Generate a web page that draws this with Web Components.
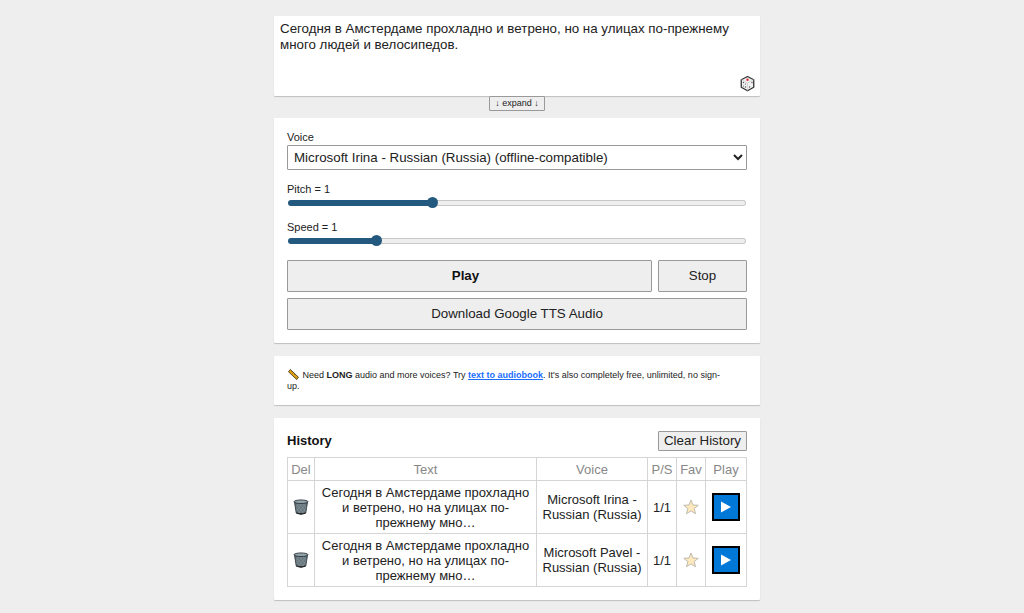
<!DOCTYPE html>
<html lang="ru">
<head>
<meta charset="utf-8">
<meta name="viewport" content="width=device-width, initial-scale=1">
<title>Text to Speech</title>
<style>
  body { margin: 0; background: #eee; color: #222; font-family: "Liberation Sans", Arial, sans-serif; font-size: 13px; }
</style>
</head>
<body>
<tts-app></tts-app>

<template id="t-app">
  <style>
    :host { display: block; padding: 16px 12px 12px 22px; }
    main { max-width: 486px; margin: 0 auto; display: flex; flex-direction: column; }
    .gap { margin-bottom: 13px; }
    .long { font-size: 9px; line-height: 11px; margin: 0; padding-right: 16px; }
    a { color: #1a6dff; font-weight: bold; }
    svg { width: 13px; height: 11px; vertical-align: -2px; }
  </style>
  <main>
    <text-editor></text-editor>
    <ui-card class="gap"><voice-controls></voice-controls></ui-card>
    <ui-card class="gap">
      <p class="long"><svg viewBox="0 0 24 24" aria-hidden="true"><path d="M1 6 5 1 23 18 19 23Z" fill="#e5a50f" stroke="#3d3220" stroke-width="1.800" stroke-linejoin="round"/><path d="m9 5-2 2m5 1-2 2m5 1-2 2m5 1-2 2m5 1-2 2" stroke="#3d3220" stroke-width="1"/></svg> Need <b>LONG</b> audio and more voices? Try <a href="#audiobook">text to audiobook</a>. It's also completely free, unlimited, no sign-up.</p>
    </ui-card>
    <ui-card><play-history></play-history></ui-card>
  </main>
</template>

<template id="t-card">
  <style>
    :host { display: block; background: #fff; border-radius: 1px; box-shadow: 0 1px 1px rgba(0,0,0,.2); padding: 13px; }
  </style>
  <slot></slot>
</template>

<template id="t-editor">
  <style>
    :host { display: flex; flex-direction: column; align-items: center; margin-bottom: 7px; }
    .box { position: relative; width: 100%; }
    textarea { display: block; box-sizing: border-box; width: 100%; height: 80px; margin: 0; padding: 5px 6px; border: 0; border-radius: 1px; resize: none; outline: 0; background: #fff; color: #222; font-family: inherit; line-height: 16px; box-shadow: 0 1px 1px rgba(0,0,0,.2); }
    .dice { position: absolute; right: 4px; bottom: 4px; width: 17px; height: 17px; padding: 0; border: 0; background: none; }
    svg { display: block; width: 17px; height: 17px; }
    .expand { position: relative; height: 15px; padding: 0 5px; border: 1px solid #999; border-radius: 1px; background: #eee; color: #222; font-family: inherit; font-size: 9px; line-height: 13px; }
  </style>
  <div class="box">
    <textarea aria-label="Text" spellcheck="false">Сегодня в Амстердаме прохладно и ветрено, но на улицах по-прежнему много людей и велосипедов.</textarea>
    <button class="dice" aria-label="Random text"><svg viewBox="0 0 34 34"><path d="M17 3 29.500 9.500V24.500L17 31.500 4.500 24.500V9.500Z" fill="#f1f1f1" stroke="#333" stroke-width="2.600" stroke-linejoin="round"/><path d="M5 9.500 17 16 29 9.500M17 16V31" fill="none" stroke="#ccc" stroke-width="1.500"/><circle cx="17" cy="9.500" r="2.400" fill="#e02c35"/><g fill="#555"><circle cx="9" cy="15" r="1.400"/><circle cx="13" cy="24" r="1.400"/><circle cx="9" cy="22" r="1.200"/><circle cx="13" cy="18" r="1.200"/><circle cx="21" cy="24" r="1.400"/><circle cx="26" cy="15" r="1.400"/></g></svg></button>
  </div>
  <button class="expand">↓ expand ↓</button>
</template>

<template id="t-range">
  <style>
    :host { display: block; }
    label { display: block; font-size: 11px; line-height: 13px; margin-bottom: 1px; }
    input { -webkit-appearance: none; appearance: none; display: block; width: 100%; height: 11px; margin: 0; background: none; }
    input::-webkit-slider-runnable-track { box-sizing: border-box; height: 6px; border: 1px solid transparent; border-radius: 3px; background: linear-gradient(#24597f, #24597f) 0 0 / var(--fill) 100% no-repeat border-box, linear-gradient(#eee, #eee) padding-box, linear-gradient(#c8c8c8, #c8c8c8) border-box; }
    input::-webkit-slider-thumb { -webkit-appearance: none; width: 11px; height: 11px; margin-top: -4px; border-radius: 50%; background: #24597f; }
    .track { padding: 0 1px; }
  </style>
  <label for="r"></label>
  <div class="track"><input id="r" type="range" step="0.1"></div>
</template>

<template id="t-controls">
  <style>
    :host { display: block; }
    label { display: block; font-size: 11px; line-height: 12px; margin-bottom: 2px; }
    select { display: block; box-sizing: border-box; width: 100%; height: 25px; padding: 0 2px; border: 1px solid #999; border-radius: 1px; background: #fff; color: #222; font-family: inherit; margin-bottom: 13px; }
    range-field { margin-bottom: 13px; }
    .last { margin-bottom: 14px; }
    .row { display: grid; grid-template-columns: 1fr 89px; gap: 6px; }
    button { height: 32px; border: 1px solid #999; border-radius: 1px; background: #eee; color: #222; font-family: inherit; padding: 0 6px 2px; }
    .play { font-weight: bold; color: #111; padding-right: 14px; }
    .wide { grid-column: 1 / -1; }
  </style>
  <label for="voice">Voice</label>
  <select id="voice"><option>Microsoft Irina - Russian (Russia) (offline-compatible)</option><option>Microsoft Pavel - Russian (Russia) (offline-compatible)</option></select>
  <range-field name="Pitch" min="0.1" max="3" value="1"></range-field>
  <range-field class="last" name="Speed" min="0.1" max="5" value="1"></range-field>
  <div class="row">
    <button class="play">Play</button><button>Stop</button>
    <button class="wide">Download Google TTS Audio</button>
  </div>
</template>

<template id="t-history">
  <style>
    :host { display: block; }
    header { display: flex; justify-content: space-between; align-items: center; margin-bottom: 6px; }
    h2 { margin: 0; padding-bottom: 2px; font-size: 13px; color: #111; }
    .clear { height: 20px; padding: 0 5px 1px; border: 1px solid #999; border-radius: 1px; background: #eee; color: #222; font-family: inherit; }
    table { width: 100%; border-collapse: collapse; table-layout: fixed; text-align: center; line-height: 15px; }
    th, td { border: 1px solid #d5d5d5; padding: 3px; }
    th { height: 16px; padding: 3px 0; font-weight: normal; color: #888; }
    td { height: 46px; }
    .del { width: 26px; } .voice { width: 110px; } .ps, .fav { width: 28px; } .go { width: 40px; }
    .ic { padding: 0; }
    .ic button { display: block; margin: 0 auto; padding: 0; border: 0; background: none; }
    svg { display: block; margin: 0 auto; }
    .ic .start { box-sizing: border-box; width: 28px; height: 28px; border: 2px solid #000; background: #0078d7; }
  </style>
  <header><h2>History</h2><button class="clear">Clear History</button></header>
  <table>
    <thead><tr><th class="del">Del</th><th>Text</th><th class="voice">Voice</th><th class="ps">P/S</th><th class="fav">Fav</th><th class="go">Play</th></tr></thead>
    <tbody></tbody>
  </table>
</template>

<script>
  const stamp = (host, id) => {
    const root = host.attachShadow({ mode: "open" });
    root.append(document.getElementById(id).content.cloneNode(true));
    return root;
  };

  customElements.define("ui-card", class extends HTMLElement {
    constructor() { super(); stamp(this, "t-card"); }
  });

  customElements.define("text-editor", class extends HTMLElement {
    constructor() { super(); stamp(this, "t-editor"); }
  });

  customElements.define("range-field", class extends HTMLElement {
    connectedCallback() {
      if (this.shadowRoot) return;
      const root = stamp(this, "t-range");
      const input = root.querySelector("input");
      const label = root.querySelector("label");
      for (const key of ["min", "max", "value"]) input.setAttribute(key, this.getAttribute(key));
      const update = () => {
        label.textContent = `${this.getAttribute("name")} = ${input.value}`;
        const part = (input.value - input.min) / (input.max - input.min);
        input.style.setProperty("--fill", `${Math.round(part * 100) + 1}%`);
      };
      input.addEventListener("input", update);
      update();
    }
  });

  customElements.define("voice-controls", class extends HTMLElement {
    constructor() { super(); stamp(this, "t-controls"); }
  });

  const TRASH = `<svg width="16" height="16" viewBox="0 0 32 32"><path d="M3 6 6.500 28Q16 32 25.500 28L29 6Z" fill="#66757c" stroke="#2c363b" stroke-width="1.800"/><path d="M8 11 21 29M14 10 25 25M20 10 27 18M7 18 14 29M24 11 11 29M18 10 7 24M12 10 6 17M26 18 18 29" stroke="#8b9ba1" stroke-width="1.100"/><ellipse cx="16" cy="5.500" rx="14" ry="3.600" fill="#91a2a8" stroke="#2c363b" stroke-width="1.800"/><path d="M7 28Q16 32 25 28" fill="none" stroke="#222" stroke-width="2.500"/></svg>`;
  const STAR = `<svg width="16" height="16" viewBox="0 0 32 32"><path d="m16 2 4 10 10.500.6-8.200 6.600 2.800 10.300-9.100-5.700-9.100 5.700 2.800-10.300-8.200-6.600L12 12Z" fill="#fde9bd" stroke="#b9b4ab" stroke-width="1.800" stroke-linejoin="round"/></svg>`;
  const START = `<svg width="24" height="24" viewBox="0 0 24 24"><path d="M7 6.500 17 12 7 17.500Z" fill="#fff"/></svg>`;

  customElements.define("play-history", class extends HTMLElement {
    constructor() {
      super();
      const root = stamp(this, "t-history");
      root.querySelector("tbody").innerHTML = ["Irina", "Pavel"].map(voice => `<tr>
        <td class="ic"><button aria-label="Delete">${TRASH}</button></td>
        <td>Сегодня в Амстердаме прохладно и ветрено, но на улицах по-прежнему мно…</td>
        <td>Microsoft ${voice} - Russian (Russia)</td><td class="ic">1/1</td>
        <td class="ic"><button aria-label="Favourite">${STAR}</button></td>
        <td class="ic"><button class="start" aria-label="Play">${START}</button></td></tr>`).join("");
    }
  });

  customElements.define("tts-app", class extends HTMLElement {
    constructor() { super(); stamp(this, "t-app"); }
  });
</script>
</body>
</html>
